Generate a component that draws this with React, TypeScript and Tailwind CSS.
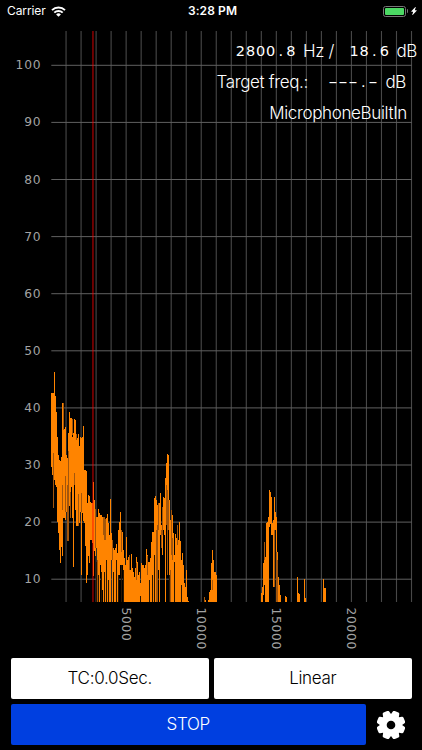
import { BsLightningChargeFill } from 'react-icons/bs'

// Plot area in pixels
const LEFT = 51.3
const RIGHT = 411.7
const TOP = 31
const BOTTOM = 602
const X_STEP = 15.02
const Y_STEP = 57.1

const ORANGE = '#ff8400'
const DIM = '#a3560c'

interface Run {
  x: number
  bars: [number, number][]
}

// One bar per pixel column: [top, bottom]
const runs: Run[] = [
  {
    x: 51,
    bars: [
      [393, 467], [393, 475], [393, 480], [372, 480], [396, 485], [412, 487], [437, 522], [455, 533],
      [460, 550], [461, 563], [457, 547], [403, 556], [426, 518], [429, 518], [427, 520], [455, 512],
      [458, 521], [433, 541], [412, 506], [418, 518], [418, 487], [437, 518], [433, 567], [419, 477],
      [420, 510], [440, 526], [438, 526], [434, 523], [446, 523], [437, 512], [438, 575], [437, 513],
      [426, 521], [470, 523], [470, 546], [471, 583], [503, 575], [495, 556], [496, 563], [502, 540],
      [503, 540], [503, 543], [482, 576], [500, 551], [515, 556], [517, 548], [517, 602], [509, 595],
      [513, 602],
    ],
  },
  {
    x: 100,
    bars: [
      [515, 565], [515, 602], [517, 590], [532, 602], [517, 602], [530, 602], [518, 560], [514, 602],
      [523, 602], [535, 602], [499, 602], [533, 560], [548, 602], [548, 602], [550, 602], [548, 602],
      [544, 590], [553, 602], [530, 602], [522, 575], [512, 565], [530, 602], [532, 565], [550, 602],
      [558, 602], [565, 602], [537, 602], [560, 602], [557, 602], [555, 602], [570, 602], [554, 602],
      [568, 602], [572, 602], [577, 602], [568, 602], [557, 602], [562, 602], [575, 602], [572, 602],
      [583, 602], [563, 602], [565, 602], [565, 602], [568, 602], [565, 602], [549, 602], [555, 602],
      [562, 602], [562, 602], [558, 602], [542, 602], [532, 602], [532, 602], [498, 602], [496, 602],
      [500, 560], [505, 602], [523, 570], [503, 602], [493, 535], [525, 545], [525, 555], [497, 530],
      [498, 535], [478, 602], [463, 490], [454, 500], [455, 520], [500, 602], [520, 602], [538, 602],
      [515, 602], [533, 602], [555, 602], [534, 602], [538, 602], [538, 602], [540, 602], [522, 602],
      [541, 602], [560, 602], [553, 602], [565, 602], [583, 602], [587, 602], [570, 602], [597, 602],
      [601, 602],
    ],
  },
  { x: 204, bars: [[597, 602], [600, 602]] },
  {
    x: 208,
    bars: [
      [600, 602], [592, 602], [590, 602], [563, 602], [550, 602], [560, 602], [572, 602], [572, 602],
      [575, 602],
    ],
  },
  {
    x: 261,
    bars: [
      [593, 602], [587, 602], [563, 595], [542, 585], [557, 602], [523, 602], [522, 602], [517, 602],
      [490, 527], [492, 524], [497, 535], [523, 535], [520, 587], [497, 545], [512, 530], [517, 560],
      [552, 602], [577, 602], [585, 602], [595, 602],
    ],
  },
  { x: 285, bars: [[596, 602], [597, 602]] },
  { x: 297, bars: [[577, 602], [593, 602], [594, 602]] },
  { x: 304, bars: [[579, 602], [598, 602]] },
  { x: 323, bars: [[579, 602], [588, 602], [588, 602]] },
]

// Partly covered columns: [x, top, bottom]
const dimBars: number[][] = [
  [53, 453, 508], [62, 485, 510], [65, 476, 512], [67, 485, 541], [68, 451, 541], [70, 492, 518],
  [74, 473, 485], [76, 434, 440], [78, 494, 526], [81, 493, 512], [63, 403, 430], [72, 419, 435],
  [95, 509, 548], [97, 560, 602], [103, 517, 535], [104, 517, 540], [105, 519, 540], [112, 540, 560],
  [121, 530, 552], [129, 555, 570], [136, 563, 580], [147, 556, 575], [156, 530, 602], [157, 525, 602],
  [158, 503, 530], [162, 507, 535], [161, 530, 548], [166, 485, 525], [167, 490, 575], [168, 500, 530],
  [171, 510, 555], [172, 538, 560], [177, 525, 545], [212, 580, 590], [274, 530, 587],
  [276, 552, 602], [277, 560, 602], [264, 542, 560], [204, 597, 602], [170, 570, 602],
]

const slits: number[][] = [
  [96, 562, 602], [98, 575, 602], [101, 572, 602], [104, 572, 602], [106, 560, 602], [108, 580, 602],
  [113, 572, 602], [116, 560, 602], [118, 575, 602], [121, 565, 602], [123, 570, 602], [140, 596, 602],
  [149, 580, 602], [152, 575, 602], [154, 555, 602], [169, 575, 602], [174, 562, 602],
  [181, 585, 602],
]

const xLabels = [5000, 10000, 15000, 20000]

function Spectrum() {
  return (
    <svg width="422" height="630" viewBox="0 22 422 630" className="block">
      <g fill="#484848">
        {Array.from({ length: 24 }, (_, i) => (
          <rect key={i} x={65.5 + i * X_STEP} y={TOP} width="1.1" height={BOTTOM - TOP} />
        ))}
      </g>
      <g fill="#606060">
        {Array.from({ length: 10 }, (_, i) => (
          <rect key={i} x={LEFT} y={64.8 + i * Y_STEP} width={RIGHT - LEFT} height="1" />
        ))}
      </g>
      <g shapeRendering="crispEdges">
        {runs.map(run =>
          run.bars.map(([top, bottom], i) => (
            <rect key={run.x + i} x={run.x + i} y={top} width="1" height={bottom - top} fill={ORANGE} />
          )),
        )}
        {dimBars.map(([x, top, bottom], i) => (
          <rect key={i} x={x} y={top} width="1" height={bottom - top} fill={DIM} />
        ))}
        {slits.map(([x, top, bottom], i) => (
          <rect key={i} x={x} y={top} width="1" height={bottom - top} fill="#2a1600" />
        ))}
      </g>
      <rect x="92.2" y={TOP} width="1.5" height={BOTTOM - TOP} fill="#ff0000" opacity="0.55" />
      <g fill="#a3a3a3" fontFamily="DejaVu Sans, sans-serif" fontSize="12.3" letterSpacing="0.7">
        {Array.from({ length: 10 }, (_, i) => (
          <text key={i} x="41.2" y={69.3 + i * Y_STEP} textAnchor="end">
            {100 - i * 10}
          </text>
        ))}
        {xLabels.map((label, i) => (
          <text key={label} transform={`translate(${121.8 + i * 75.1} 607.5) rotate(90)`}>
            {label}
          </text>
        ))}
      </g>
    </svg>
  )
}

// Fixed-width digits so the readout doesn't jump
function Digits({ value }: { value: string }) {
  return (
    <span className="flex font-['DejaVu_Sans',sans-serif] text-[14.5px] font-normal tracking-normal">
      {value.split('').map((char, i) => (
        <span key={i} className={char === '-' ? 'w-[10.1px] scale-x-[1.8] text-center' : 'w-[10.1px] text-center'}>
          {char}
        </span>
      ))}
    </span>
  )
}

function StatusBar() {
  return (
    <div className="grid h-[22px] grid-cols-3 items-center pr-[4px] pl-[7px] text-[12px]">
      <div className="flex items-center gap-[5px]">
        <span className="tracking-[-0.1px]">Carrier</span>
        <svg width="15" height="11" viewBox="0 0 15 11" fill="none" stroke="white" strokeWidth="1.9">
          <path d="M1 4.2a9.2 9.2 0 0 1 13 0" />
          <path d="M3.3 6.7a5.9 5.9 0 0 1 8.4 0" />
          <path d="M7.5 10.8 5.1 8.4a3.4 3.4 0 0 1 4.8 0Z" fill="white" stroke="none" />
        </svg>
      </div>
      <div className="text-center font-semibold tracking-[0.1px]">3:28 PM</div>
      <div className="flex items-center justify-end">
        <div className="h-[11px] w-[23px] rounded-[2.5px] border border-[#777] p-px">
          <div className="h-full rounded-[1px] bg-[#4cd964]" />
        </div>
        <div className="ml-px h-1 w-[1.5px] rounded-r bg-[#777]" />
        <BsLightningChargeFill className="ml-[2px] h-[10px] w-[8px]" />
      </div>
    </div>
  )
}

function Gear() {
  return (
    <svg width="28" height="28" viewBox="-14 -14 28 28">
      <g fill="white">
        {[22.5, 67.5, 112.5, 157.5, 202.5, 247.5, 292.5, 337.5].map(angle => (
          <path
            key={angle}
            transform={`rotate(${angle})`}
            d="M-4.5-9-3.5-13.2Q-3.2-14.4-2-14.4H2Q3.2-14.4 3.5-13.2L4.5-9Z"
          />
        ))}
        <circle r="10.8" />
      </g>
      <circle r="4.3" fill="black" />
    </svg>
  )
}

export default function App() {
  return (
    <div className="flex h-[750px] w-[422px] flex-col bg-black font-['Inter',sans-serif] text-white">
      <StatusBar />
      <div className="relative h-[630px]">
        <Spectrum />
        <div className="absolute top-[14px] right-0 flex flex-col items-end text-[17px] leading-[31px] font-light tracking-[-0.35px]">
          <div className="mr-[5px] flex">
            <Digits value="2800.8" />
            <span className="ml-[7px]">Hz /</span>
            <span className="ml-[15px]">
              <Digits value="18.6" />
            </span>
            <span className="ml-[7px]">dB</span>
          </div>
          <div className="mr-[16px] flex">
            <span>Target freq.:</span>
            <span className="ml-[20px]">
              <Digits value="---.-" />
            </span>
            <span className="ml-[7px]">dB</span>
          </div>
          <div className="mr-[15px]">MicrophoneBuiltIn</div>
        </div>
      </div>
      <div className="flex flex-col gap-[5px] pt-[6px] pr-[10px] pl-[10.5px] text-[17px] font-light tracking-[-0.3px]">
        <div className="flex h-[41px] gap-[4.5px] text-black">
          <button className="flex-1 rounded-[2px] bg-white pt-px">TC:0.0Sec.</button>
          <button className="flex-1 rounded-[2px] bg-white pt-px">Linear</button>
        </div>
        <div className="flex h-[41px] items-center">
          <button className="h-full w-[355.5px] rounded-[2px] bg-[#003fe0] pt-px">STOP</button>
          <button aria-label="Settings" className="ml-[11px]">
            <Gear />
          </button>
        </div>
      </div>
    </div>
  )
}
